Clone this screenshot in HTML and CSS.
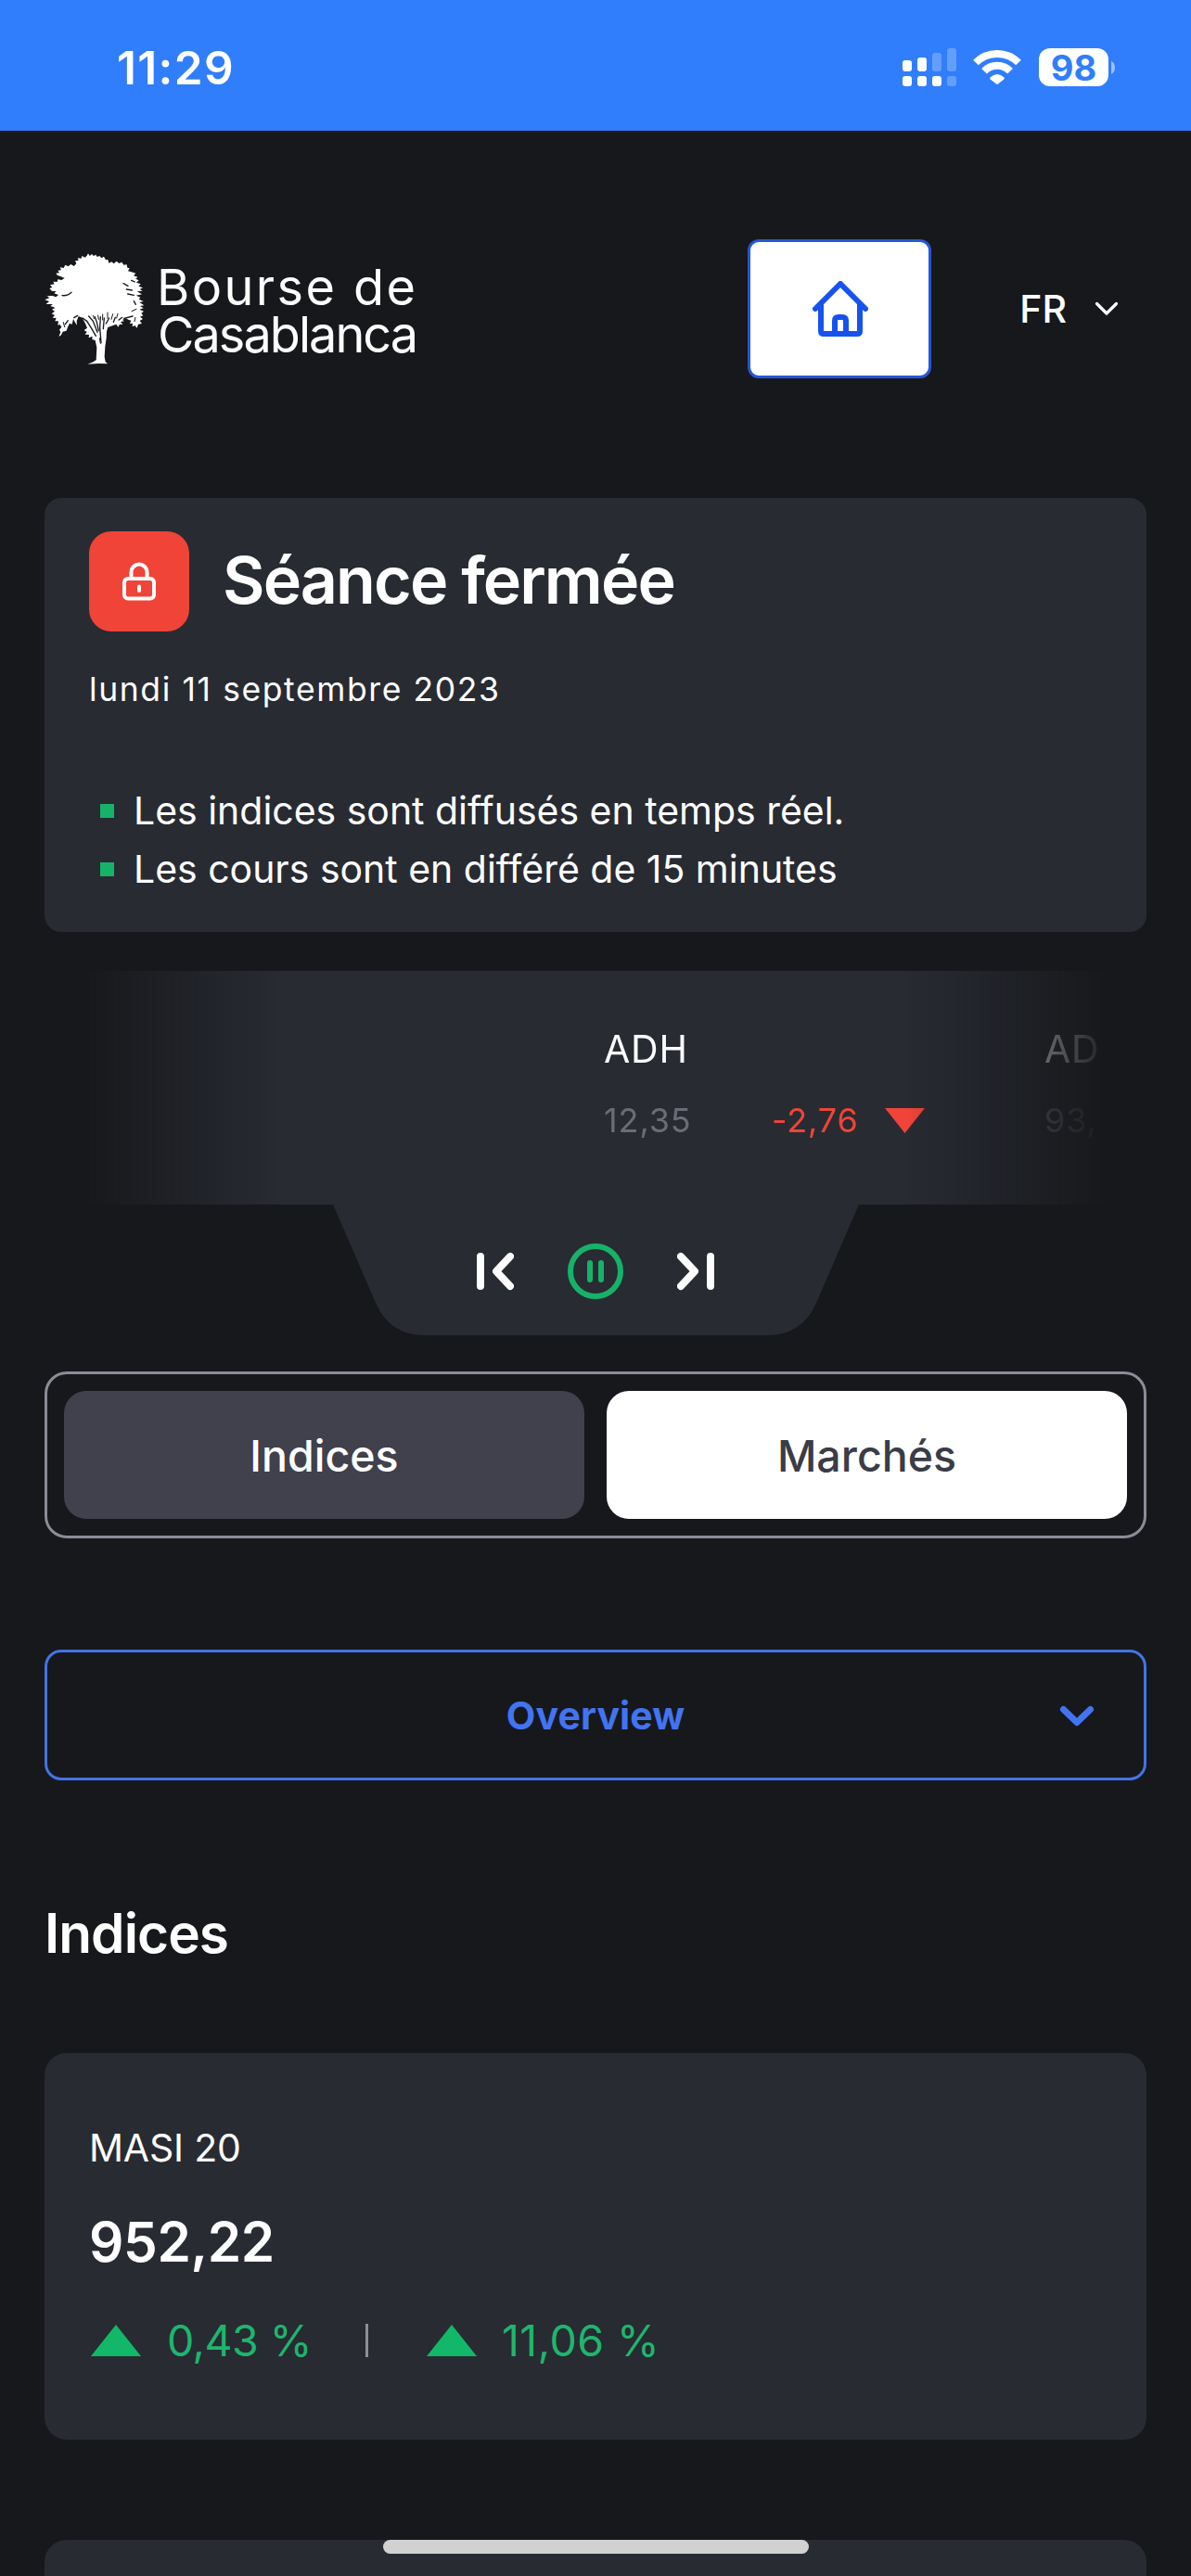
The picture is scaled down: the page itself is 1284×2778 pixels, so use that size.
FILE: index.html
```html
<!DOCTYPE html>
<html lang="fr">
<head>
<meta charset="utf-8">
<title>Bourse de Casablanca</title>
<link rel="stylesheet" href="styles.css">
</head>
<body>
<div class="screen">
  <div class="status">
    <span class="status-time">11:29</span>
    <div class="status-icons">
      <svg class="signal" width="58" height="41" viewBox="0 0 58 41" fill="#fff">
        <rect x="0" y="13" width="10" height="12" rx="3"/><rect x="16" y="10" width="10" height="15" rx="3"/>
        <rect x="0" y="30" width="10" height="11" rx="3"/><rect x="16" y="30" width="10" height="11" rx="3"/><rect x="32" y="30" width="10" height="11" rx="3"/>
        <g opacity=".25"><rect x="32" y="5" width="10" height="20" rx="3"/><rect x="48" y="0" width="10" height="25" rx="3"/><rect x="48" y="30" width="10" height="11" rx="3"/></g>
      </svg>
      <svg class="wifi" width="52" height="41" viewBox="0 0 52 41">
        <g fill="none" stroke="#fff" stroke-width="8"><path d="M3 15.500A32.500 32.500 0 0 1 49 15.500"/><path d="M12 24.800A19.500 19.500 0 0 1 40 24.800"/></g>
        <path d="M18.500 31.500Q26 24.500 33.500 31.500Q34.200 32.500 33.300 33.400L27 38.600Q26 39.400 25 38.600L18.700 33.400Q17.800 32.500 18.500 31.500Z" fill="#fff"/>
      </svg>
      <div class="battery"><span class="battery-level">98</span></div>
      <svg class="nub" width="4" height="14" viewBox="0 0 4 14"><path d="M0 0Q4 2 4 7T0 14Z" fill="#fff" opacity=".5"/></svg>
    </div>
  </div>

  <header class="header">
    <div class="logo">
      <svg class="tree" width="108" height="120" viewBox="54 70 322 360" fill="#fff">
        <path d="M190 78L194 71L199 79L206 73L212 79L219 75L223 82L231 79L237 86L245 81L251 92L258 91L261 102L270 98L277 104L286 96L294 103L303 99L309 108L319 107L321 117L328 119L323 128L334 131L348 135L341 143L354 147L348 153L358 158L350 165L364 170L357 177L371 182L361 187L370 192L352 194L368 203L349 207L363 213L358 219L373 226L360 229L375 239L362 241L373 248L360 252L374 258L366 264L372 272L362 276L371 283L361 289L368 298L356 300L352 312L345 304L337 308L338 297L329 298L333 288L324 285L316 280L305 286L311 290L299 292L306 301L296 300L291 309L285 300L272 305L258 310L254 323L253 345L249 372L247 405L250 422L257 428L228 427L192 429L208 423L220 416L222 375L217 352L207 349L208 339L196 344L197 334L184 333L190 325L181 319L191 312L184 296L175 279L163 274L157 290L158 303L151 293L146 283L142 300L134 297L128 309L124 321L112 324L107 335L99 340L105 325L101 318L108 309L103 301L96 303L98 290L87 290L91 280L79 279L86 271L76 266L86 258L77 252L88 247L72 241L80 235L58 235L68 226L54 221L69 215L61 209L79 208L90 212L98 205L84 200L91 193L77 193L69 184L78 181L71 173L85 170L81 162L94 163L96 155L108 157L118 151L105 145L95 142L90 135L101 134L96 126L107 125L103 116L115 118L120 108L130 113L138 106L148 112L156 104L152 95L163 94L160 86L172 87L174 79L184 84Z"/>
        <g fill="none" stroke="#17181b" stroke-linecap="round">
          <path stroke-width="4" d="M110 207Q128 209 140 197M308 168L323 176M318 187L336 190M334 158L345 163M322 202L342 206M342 225L348 236"/>
          <path stroke-width="4" d="M176 280L190 290L204 312L219 338M196 274L210 290L224 326M216 276L222 293L228 321M234 276L232 312L236 360M246 280L243 315M262 280L252 298M282 278L276 293M304 278L293 286M338 274L310 281M160 272L148 279M129 288L120 300"/>
          <path stroke-width="3" d="M211 272L213 282M226 271L228 284M241 268V286M257 262V281M274 267L269 284M290 266L286 280M231 345L234 362M114 294L118 309M347 278L344 291M335 258L350 251"/>
        </g>
      </svg>
      <div class="wordmark"><span class="wordmark-top">Bourse de</span><span class="wordmark-bottom">Casablanca</span></div>
    </div>
    <div class="header-actions">
      <a class="home">
        <svg width="60" height="60" viewBox="0 0 60 60" fill="none" stroke="#1652ee" stroke-width="6" stroke-linecap="round" stroke-linejoin="round"><path d="M3 30L30 3L57 30M9 25V54Q9 57 12 57H48Q51 57 51 54V25M24 56V43Q24 39 28 39H32Q36 39 36 43V56"/></svg>
      </a>
      <div class="lang"><span class="lang-code">FR</span>
        <svg width="26" height="16" viewBox="0 0 26 16" fill="none" stroke="#fff" stroke-width="3.200" stroke-linecap="round" stroke-linejoin="round"><path d="M2.500 2.500L13 13L23.500 2.500"/></svg>
      </div>
    </div>
  </header>

  <main class="main">
    <section class="session">
      <div class="session-head">
        <div class="lock"><svg width="36" height="42" viewBox="0 0 36 42" fill="none" stroke="#fff" stroke-width="4" stroke-linecap="round" stroke-linejoin="round"><rect x="2" y="18" width="32" height="21.500" rx="4"/><path d="M9.500 18V11A8.500 8.500 0 0 1 26.500 11V18M18 26.500V31"/></svg></div>
        <h1 class="session-title">Séance fermée</h1>
      </div>
      <p class="session-date">lundi 11 septembre 2023</p>
      <ul class="notes">
        <li class="note">Les indices sont diffusés en temps réel.</li>
        <li class="note">Les cours sont en différé de 15 minutes</li>
      </ul>
    </section>

    <section class="ticker">
      <div class="ticker-window">
        <div class="quote">
          <div class="quote-name">ADH</div>
          <div class="quote-row"><span class="quote-price">12,35</span><span class="quote-change">-2,76</span>
            <svg width="43" height="27" viewBox="0 0 43 27"><path d="M0 0H43L21.500 27Z" fill="#f04438"/></svg></div>
        </div>
        <div class="quote">
          <div class="quote-name">AD</div>
          <div class="quote-row"><span class="quote-price">93,</span></div>
        </div>
      </div>
      <div class="controls">
        <svg class="controls-shape" width="567" height="141" viewBox="0 0 567 141"><path d="M0 0H567L521 106Q506 141 468 141H99Q61 141 46 106Z" fill="#282b32"/></svg>
        <svg class="control" width="40" height="46" viewBox="0 0 40 46" fill="none" stroke="#fff" stroke-width="8" stroke-linecap="round" stroke-linejoin="round"><path d="M4 7V39M36 7L21 23L36 39"/></svg>
        <svg class="control" width="60" height="60" viewBox="0 0 60 60" fill="none" stroke="#17b26a" stroke-width="6" stroke-linecap="round"><circle cx="30" cy="30" r="27"/><path d="M24 21V39M36 21V39"/></svg>
        <svg class="control" width="40" height="46" viewBox="0 0 40 46" fill="none" stroke="#fff" stroke-width="8" stroke-linecap="round" stroke-linejoin="round"><path d="M36 7V39M4 7L19 23L4 39"/></svg>
      </div>
    </section>

    <div class="tabs">
      <div class="tab">Indices</div>
      <div class="tab tab-light">Marchés</div>
    </div>

    <div class="select">
      <span class="select-label">Overview</span>
      <svg class="select-arrow" width="38" height="24" viewBox="0 0 38 24" fill="none" stroke="#4274f2" stroke-width="7" stroke-linecap="round" stroke-linejoin="round"><path d="M4.500 4.500L19 18.500L33.500 4.500"/></svg>
    </div>

    <h2 class="heading">Indices</h2>

    <section class="index-card">
      <div class="index-name">MASI 20</div>
      <div class="index-value">952,22</div>
      <div class="index-row">
        <svg width="54" height="34" viewBox="0 0 54 34"><path d="M27 0L54 34H0Z" fill="#12b76a"/></svg>
        <span class="pct pct-day">0,43 %</span>
        <span class="sep"></span>
        <svg width="54" height="34" viewBox="0 0 54 34"><path d="M27 0L54 34H0Z" fill="#12b76a"/></svg>
        <span class="pct pct-year">11,06 %</span>
      </div>
    </section>
    <section class="index-card"></section>
  </main>
  <div class="home-indicator"></div>
</div>
</body>
</html>
```
FILE: styles.css
```css
* { box-sizing: border-box; margin: 0; padding: 0; }
body { background: #17181b; }
svg { display: block; flex: none; }

.screen {
  position: relative;
  width: 1284px;
  height: 2778px;
  overflow: hidden;
  background: #17181b;
  color: #fff;
  font-family: Inter, "Liberation Sans", sans-serif;
  white-space: nowrap;
}

/* Status bar */
.status { display: flex; justify-content: space-between; height: 141px; padding: 52px 82px 0 126px; background: #307efb; }
.status-time { height: 42px; line-height: 42px; font-size: 49.5px; font-weight: 600; letter-spacing: 1.38px; }
.status-icons { display: flex; height: 41px; align-items: center; }
.wifi { margin-left: 18px; }
.battery { width: 75px; height: 41px; margin-left: 19px; border-radius: 12px; background: #fff; text-align: center; }
.battery-level { font-size: 38px; font-weight: 700; line-height: 42px; color: #307efb; }
.nub { margin-left: 3px; }

/* Header */
.header { display: flex; justify-content: space-between; height: 396px; padding: 117px 78px 0 48px; }
.logo { display: flex; height: 150px; padding-top: 15px; }
.wordmark { display: flex; flex-direction: column; margin: 11px 0 0 13px; font-size: 54px; font-weight: 400; line-height: 51px; }
.wordmark-top { letter-spacing: 2.4px; }
.wordmark-bottom { letter-spacing: -1.95px; margin-left: 1px; }
.header-actions { display: flex; }
.home { display: flex; width: 198px; height: 150px; align-items: center; justify-content: center; border: 3px solid #2456d6; border-radius: 12px; background: #fff; padding-left: 2px; }
.lang { display: flex; height: 150px; align-items: center; margin-left: 95px; gap: 30px; }
.lang-code { font-size: 41px; font-weight: 500; line-height: 50px; }

.main { padding: 0 48px; }

/* Session card */
.session { height: 468px; padding: 36px 48px 0; border-radius: 18px; background: #282b32; }
.session-head { display: flex; height: 108px; gap: 36px; }
.lock { display: flex; width: 108px; height: 108px; align-items: center; justify-content: center; border-radius: 24px; background: #f04438; }
.session-title { font-size: 70px; font-weight: 600; line-height: 105px; letter-spacing: -1.9px; }
.session-date { margin-top: 36px; font-size: 35.5px; line-height: 54px; letter-spacing: 1.6px; }
.notes { margin-top: 72px; list-style: none; }
.note { display: flex; align-items: center; padding-left: 12px; font-size: 41px; line-height: 63px; letter-spacing: -.02px; }
.note::before { content: ""; width: 15px; height: 15px; margin-right: 21px; background: #17b26a; }

/* Ticker */
.ticker { margin-top: 42px; padding: 0 48px; }
.ticker-window {
  display: flex;
  height: 252px;
  padding: 54px 0 0 555px;
  overflow: hidden;
  background: #282b32;
  -webkit-mask-image: linear-gradient(90deg, transparent -16px, #000 206px, #000 882px, transparent 1106px);
  mask-image: linear-gradient(90deg, transparent -16px, #000 206px, #000 882px, transparent 1106px);
}
.quote { flex: none; width: 475px; }
.quote-name { font-size: 41px; line-height: 60px; letter-spacing: .8px; }
.quote-row { display: flex; align-items: center; margin-top: 20px; font-size: 36px; line-height: 54px; letter-spacing: .9px; }
.quote-price { width: 181px; color: #6a6c78; }
.quote-change { width: 122px; color: #f04438; }
.controls { position: relative; display: flex; width: 567px; height: 141px; margin: 0 auto; padding-top: 2px; justify-content: center; align-items: center; gap: 58px; }
.controls-shape { position: absolute; left: 0; top: 0; }
.control { position: relative; }

/* Tabs */
.tabs { display: flex; gap: 24px; height: 180px; margin-top: 39px; padding: 18px; border: 3px solid #8a8d97; border-radius: 24px; }
.tab { flex: 1; border-radius: 24px; background: #40414c; font-size: 46.5px; font-weight: 500; line-height: 140px; text-align: center; }
.tab-light { background: #fff; color: #3b3c46; }

/* Select */
.select { position: relative; height: 141px; margin-top: 120px; border: 3px solid #4473e6; border-radius: 18px; text-align: center; }
.select-label { font-size: 41px; font-weight: 700; line-height: 137px; letter-spacing: .1px; color: #4274f2; }
.select-arrow { position: absolute; right: 53px; top: 57px; }

.heading { margin: 129px 0 93px; font-size: 58.5px; font-weight: 600; line-height: 72px; letter-spacing: -.95px; }

/* Index cards */
.index-card { height: 417px; margin-bottom: 108px; padding: 72px 48px 0; border-radius: 24px; background: #282b32; }
.index-name { font-size: 41px; line-height: 60px; letter-spacing: -.2px; }
.index-value { margin-top: 30px; font-size: 58.5px; font-weight: 600; line-height: 84px; letter-spacing: -.4px; }
.index-row { display: flex; align-items: center; height: 60px; margin-top: 34px; padding-left: 2px; font-size: 46.5px; line-height: 60px; color: #1fb56e; }
.pct-day { width: 214px; margin-left: 28px; letter-spacing: -.55px; }
.pct-year { margin-left: 27px; letter-spacing: .45px; }
.sep { width: 3px; height: 36px; margin-right: 63px; background: #8d8f99; }

.home-indicator { position: absolute; left: 413px; top: 2739px; width: 459px; height: 15px; border-radius: 8px; background: #d1d1d1; }
```
